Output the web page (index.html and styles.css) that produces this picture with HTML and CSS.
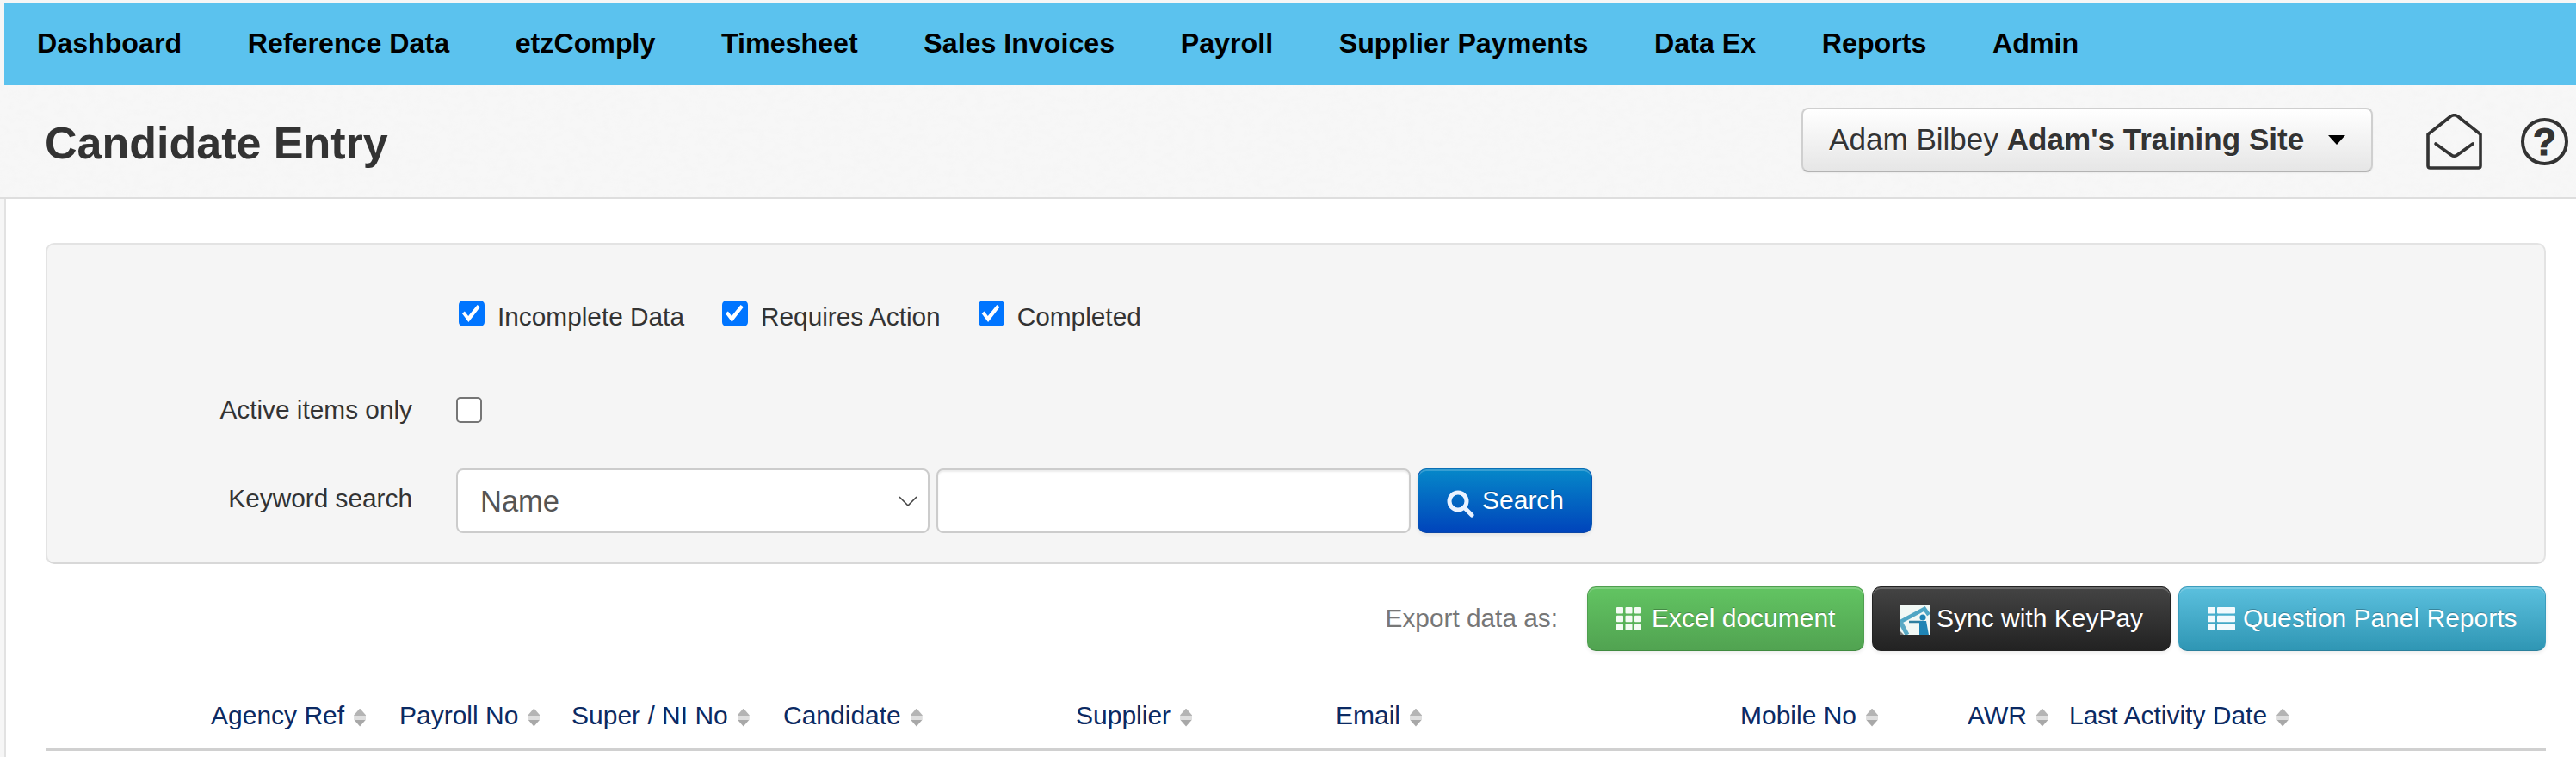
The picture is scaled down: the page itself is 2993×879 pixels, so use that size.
FILE: index.html
```html
<!DOCTYPE html>
<html lang="en">
<head>
<meta charset="utf-8">
<title>Candidate Entry</title>
<link rel="stylesheet" href="styles.css">
</head>
<body>
<nav class="topnav">
  <a class="nav-item">Dashboard</a>
  <a class="nav-item">Reference Data</a>
  <a class="nav-item">etzComply</a>
  <a class="nav-item">Timesheet</a>
  <a class="nav-item">Sales Invoices</a>
  <a class="nav-item">Payroll</a>
  <a class="nav-item">Supplier Payments</a>
  <a class="nav-item">Data Ex</a>
  <a class="nav-item">Reports</a>
  <a class="nav-item">Admin</a>
</nav>

<header class="page-head">
  <svg class="texture" aria-hidden="true">
    <filter id="paper" x="0" y="0" width="100%" height="100%">
      <feTurbulence type="fractalNoise" baseFrequency="0.09 0.14" numOctaves="3" seed="4"/>
      <feColorMatrix type="matrix" values="0 0 0 0 0.55  0 0 0 0 0.55  0 0 0 0 0.55  0.5 0 0 0 -0.2"/>
    </filter>
    <rect width="100%" height="100%" filter="url(#paper)"/>
  </svg>
  <h1 class="page-title">Candidate Entry</h1>
  <button class="account" type="button">
    <span class="account-text">Adam Bilbey <b>Adam's Training Site</b></span>
    <span class="caret"></span>
  </button>
  <svg class="icon-mail" width="65" height="65" viewBox="0 0 65 65" fill="none" stroke="#333" stroke-width="3.6" stroke-linejoin="round" stroke-linecap="round">
    <path d="M2 24 L28.5 3 Q32.5 0.5 36.5 3 L63 24 V60.5 Q63 63 60.5 63 H4.5 Q2 63 2 60.5 Z"/>
    <path d="M11 35 L29 48 Q32.5 50.5 36 48 L54 35"/>
  </svg>
  <span class="icon-help">?</span>
</header>

<main class="content">
  <form class="filters">
    <div class="filter-row row-status">
      <div class="filter-label"></div>
      <div class="status-checks">
        <label class="check"><input class="box" type="checkbox" checked><span>Incomplete Data</span></label>
        <label class="check"><input class="box" type="checkbox" checked><span>Requires Action</span></label>
        <label class="check"><input class="box" type="checkbox" checked><span>Completed</span></label>
      </div>
    </div>
    <div class="filter-row row-active">
      <div class="filter-label">Active items only</div>
      <input class="box" type="checkbox">
    </div>
    <div class="filter-row row-search">
      <div class="filter-label">Keyword search</div>
      <div class="search-controls">
        <div class="select-wrap">
          <select class="select"><option>Name</option></select>
          <svg class="chevron" width="22" height="12" viewBox="0 0 22 12" fill="none" stroke="#444" stroke-width="1.6"><path d="M1 1 L11 11 L21 1"/></svg>
        </div>
        <input class="keyword" type="text">
        <button class="btn btn-search" type="button">
          <svg class="btn-icon" width="32" height="33" viewBox="0 0 32 33" fill="none" stroke="#eaf2ff" stroke-linecap="round"><circle cx="13" cy="13" r="10" stroke-width="5"/><path d="M21 21 L29 29" stroke-width="5"/></svg>
          <span>Search</span>
        </button>
      </div>
    </div>
  </form>

  <div class="toolbar">
    <span class="export-label">Export data as:</span>
    <button class="btn btn-excel" type="button">
      <svg class="btn-icon" width="29" height="27" viewBox="0 0 29 27" fill="#f4fbf4"><rect width="8" height="7.5" rx="1"/><rect x="10.5" width="8" height="7.5" rx="1"/><rect x="21" width="8" height="7.5" rx="1"/><rect y="9.7" width="8" height="7.5" rx="1"/><rect x="10.5" y="9.7" width="8" height="7.5" rx="1"/><rect x="21" y="9.7" width="8" height="7.5" rx="1"/><rect y="19.4" width="8" height="7.5" rx="1"/><rect x="10.5" y="19.4" width="8" height="7.5" rx="1"/><rect x="21" y="19.4" width="8" height="7.5" rx="1"/></svg>
      <span>Excel document</span>
    </button>
    <button class="btn btn-dark" type="button">
      <svg class="keypay" width="35" height="35" viewBox="0 0 35 35">
        <rect width="35" height="35" fill="#f1f8f5"/>
        <path d="M1 20 L29 5 L34 12" fill="none" stroke="#4fa6c4" stroke-width="4.5"/>
        <path d="M1 20 L9 35" fill="none" stroke="#5aa9c4" stroke-width="5"/>
        <path d="M11 20 H25" stroke="#2f7f9f" stroke-width="2.5"/>
        <circle cx="27" cy="15" r="3.6" fill="#1f84b4"/>
        <path d="M23 19 H31 L34 35 H23 Z" fill="#1f84b4"/>
        <path d="M0 30 L5 35 H0 Z" fill="#777"/>
      </svg>
      <span>Sync with KeyPay</span>
    </button>
    <button class="btn btn-info" type="button">
      <svg class="btn-icon" width="32" height="27" viewBox="0 0 32 27" fill="#f2fafd"><rect width="9" height="7.5" rx="1"/><rect x="11" width="21" height="7.5" rx="1"/><rect y="9.7" width="9" height="7.5" rx="1"/><rect x="11" y="9.7" width="21" height="7.5" rx="1"/><rect y="19.4" width="9" height="7.5" rx="1"/><rect x="11" y="19.4" width="21" height="7.5" rx="1"/></svg>
      <span>Question Panel Reports</span>
    </button>
  </div>

  <div class="table-head">
    <div class="th">Agency Ref<span class="sort"></span></div>
    <div class="th">Payroll No<span class="sort"></span></div>
    <div class="th">Super / NI No<span class="sort"></span></div>
    <div class="th">Candidate<span class="sort"></span></div>
    <div class="th">Supplier<span class="sort"></span></div>
    <div class="th">Email<span class="sort"></span></div>
    <div class="th">Mobile No<span class="sort"></span></div>
    <div class="th">AWR<span class="sort"></span></div>
    <div class="th">Last Activity Date<span class="sort"></span></div>
  </div>
</main>
</body>
</html>
```

FILE: styles.css
```css
* { box-sizing: border-box; }

html, body { height: 100%; }

body {
  margin: 0;
  background: #f6f6f6;
  color: #333;
  font-family: "Liberation Sans", Arial, sans-serif;
  font-size: 29.8px;
  overflow: hidden;
}

/* top navigation */
.topnav {
  display: flex;
  align-items: center;
  height: 95px;
  margin: 4px 0 0 5px;
  padding-bottom: 3px;
  background: #5bc2ee;
}

.nav-item {
  padding: 0 38.3px;
  color: #000;
  font-size: 32.2px;
  font-weight: 700;
  white-space: nowrap;
}

.nav-item:first-child { padding-left: 38px; }

/* page heading */
.page-head {
  position: relative;
  display: flex;
  align-items: center;
  height: 132px;
  padding: 0 9px 4px 52px;
  background: #f7f7f7;
  border-bottom: 2px solid #dedede;
}

.texture {
  position: absolute;
  inset: 0;
  width: 100%;
  height: 100%;
  opacity: 0.14;
}

.page-title {
  position: relative;
  margin: 8px 0 0;
  color: #333;
  font-size: 52px;
  font-weight: 700;
}

.account {
  position: relative;
  display: flex;
  align-items: center;
  width: 664px;
  height: 75px;
  margin-left: auto;
  padding: 0 0 0 30px;
  background: linear-gradient(#ffffff, #e6e6e6);
  border: 2px solid #cfcfcf;
  border-bottom-color: #b3b3b3;
  border-radius: 8px;
  color: #333;
  font-family: inherit;
  font-size: 35.1px;
  text-shadow: 0 1px 1px #fff;
  box-shadow: inset 0 1px 0 #fff, 0 1px 2px rgba(0, 0, 0, 0.05);
}

.account-text { white-space: nowrap; }

.caret {
  width: 0;
  height: 0;
  margin-left: 28px;
  border-style: solid;
  border-width: 11px 10px 0;
  border-color: #000 transparent transparent;
}

.icon-mail {
  position: relative;
  flex: none;
  margin-left: 62px;
  margin-top: 4px;
}

.icon-help {
  position: relative;
  display: flex;
  flex: none;
  align-items: center;
  justify-content: center;
  width: 55px;
  height: 55px;
  margin-left: 45px;
  margin-top: 5px;
  border: 4px solid #333;
  border-radius: 50%;
  color: #333;
  font-size: 44px;
  font-weight: 700;
  line-height: 1;
  -webkit-text-stroke: 1.2px #333;
}

/* content */
.content {
  height: 650px;
  margin-left: 5px;
  padding: 51px 35px 0 46px;
  background: #fff;
  border-left: 2px solid #e2e2e2;
}

.filters {
  height: 373px;
  padding-top: 65px;
  background: #f5f5f5;
  border: 2px solid #e3e3e3;
  border-bottom-color: #d8d8d8;
  border-radius: 10px;
}

.filter-row {
  display: grid;
  grid-template-columns: 424px 1fr;
  column-gap: 51px;
  align-items: start;
}

.row-status { height: 112px; }
.row-active { height: 83px; }
.row-search { height: 75px; }

.filter-label {
  color: #333;
  line-height: 30px;
  text-align: right;
  white-space: nowrap;
}

.row-search .filter-label { padding-top: 20px; }

.status-checks {
  display: flex;
  gap: 44px;
  padding-left: 3px;
}

.check {
  display: flex;
  align-items: flex-start;
  gap: 15px;
  white-space: nowrap;
}

.check span { padding-top: 1px; line-height: 36px; }

.box {
  position: relative;
  display: block;
  width: 30px;
  height: 30px;
  margin: 0;
  appearance: none;
  background: #fff;
  border: 2px solid #767676;
  border-radius: 5px;
}

.box:checked {
  background: #0075ff;
  border-color: #0075ff;
}

.box:checked::before {
  content: "";
  position: absolute;
  inset: -2px;
  background: #fff;
  clip-path: polygon(13% 50%, 23% 42%, 37% 60%, 72% 17%, 83% 25%, 38% 83%);
}

.search-controls {
  display: flex;
  align-items: stretch;
  height: 75px;
}

.select-wrap {
  position: relative;
  width: 550px;
}

.select {
  width: 100%;
  height: 100%;
  padding: 0 0 0 26px;
  appearance: none;
  background: #fff;
  border: 2px solid #ccc;
  border-radius: 8px;
  color: #555;
  font-family: inherit;
  font-size: 34.5px;
}

.chevron {
  position: absolute;
  top: 32px;
  right: 14px;
}

.keyword {
  width: 551px;
  margin-left: 8px;
  background: #fff;
  border: 2px solid #ccc;
  border-radius: 8px;
  box-shadow: inset 0 2px 2px rgba(0, 0, 0, 0.08);
}

/* buttons */
.btn {
  display: flex;
  align-items: center;
  height: 75px;
  border: 1px solid;
  border-radius: 10px;
  color: #fff;
  font-family: inherit;
  font-size: 30px;
  white-space: nowrap;
  text-shadow: 0 -1px 0 rgba(0, 0, 0, 0.25);
  box-shadow: inset 0 2px 0 rgba(255, 255, 255, 0.2), 0 2px 4px rgba(0, 0, 0, 0.08);
}

.btn-search {
  width: 203px;
  margin-left: 8px;
  padding: 0 0 0 33px;
  gap: 9px;
  background: linear-gradient(#0688c9, #0044bb);
  border-color: #0a6fb5 #0a55b0 #0a46a8;
}

.btn-search .btn-icon { margin-top: 8px; }

.toolbar {
  display: flex;
  align-items: center;
  justify-content: flex-end;
  margin-top: 26px;
  gap: 9px;
}

.export-label {
  margin-right: 25px;
  color: #777;
  padding-bottom: 2px;
}

.btn-excel {
  width: 322px;
  padding: 0 0 0 33px;
  gap: 12px;
  background: linear-gradient(#62c462, #51a351);
  border-color: #4f9f4f #4f9f4f #3f8a3f;
}

.btn-dark {
  width: 347px;
  padding: 0 0 0 31px;
  gap: 8px;
  background: linear-gradient(#444444, #222222);
  border-color: #222;
}

.btn-info {
  width: 427px;
  padding: 0 0 0 33px;
  gap: 9px;
  background: linear-gradient(#5bc0de, #2f96b4);
  border-color: #3b9dbd #3b9dbd #2a7f9c;
}

.keypay { flex: none; margin-top: 2px; }

.btn span { padding-bottom: 2px; }

/* table header */
.table-head {
  display: grid;
  grid-template-columns: 192px 219px 200px 246px 340px 302px 470px 264px 118px 1fr;
  align-items: center;
  height: 77px;
  margin-top: 39px;
  padding-bottom: 2px;
  border-bottom: 3px solid #d0d0d0;
  font-size: 30px;
}

.th {
  display: flex;
  align-items: center;
  gap: 11px;
  color: #0b2a63;
  white-space: nowrap;
}

.th:first-child { grid-column: 2; }

.sort {
  position: relative;
  display: block;
  width: 14px;
  height: 21px;
  margin-top: 4px;
  background: linear-gradient(#b4b4b4 0 8px, #dedede 8px 13px, #a8a8a8 13px);
  clip-path: polygon(50% 0, 100% 38%, 100% 62%, 50% 100%, 0 62%, 0 38%);
}
```
